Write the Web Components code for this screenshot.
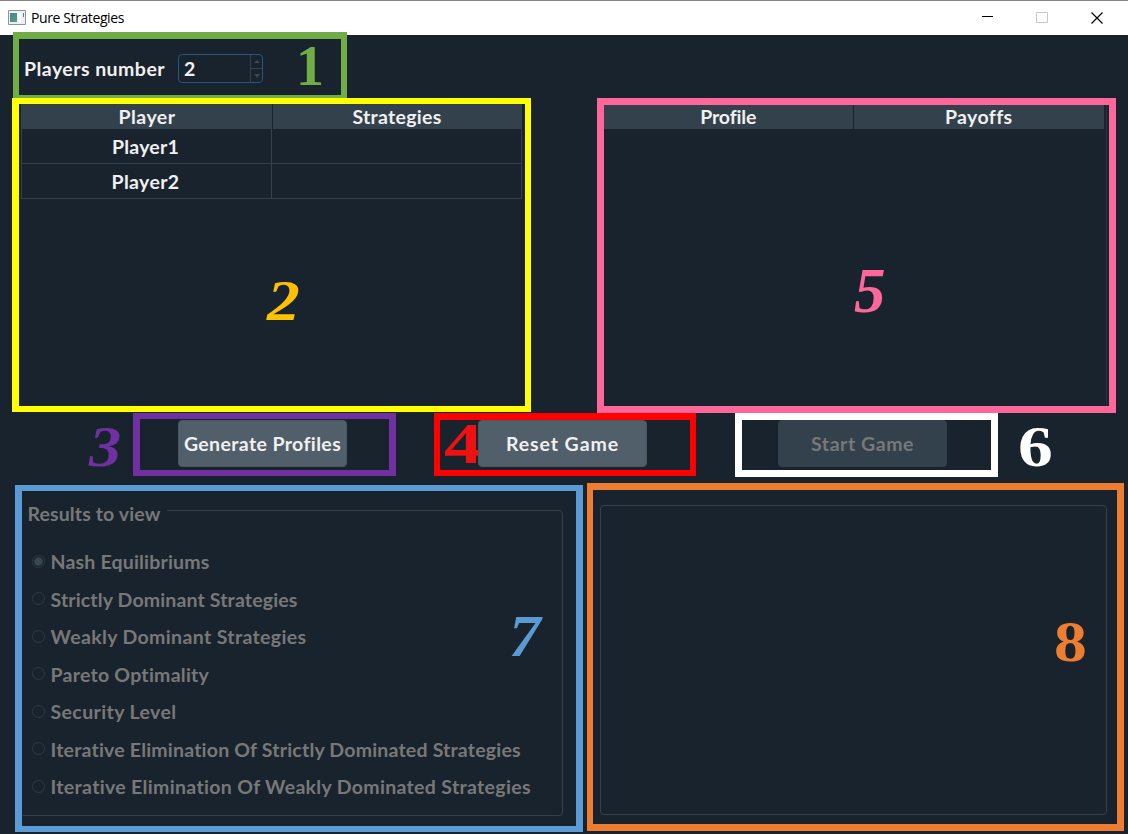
<!DOCTYPE html>
<html lang="en">
<head>
<meta charset="utf-8">
<title>Pure Strategies</title>
<style>
html,body{margin:0;height:100%;overflow:hidden;background:#19232d}
</style>
</head>
<body>
<strategy-app></strategy-app>
<script>
const define = (name, html, setup) => customElements.define(name, class extends HTMLElement {
  connectedCallback() {
    if (this.shadowRoot) return;
    const t = document.createElement('template');
    t.innerHTML = html;
    this.attachShadow({mode: 'open'}).append(t.content.cloneNode(true));
    if (setup) setup(this, this.shadowRoot);
  }
});

// Text tracked to occupy a given advance width.
define('fit-text', `<style>:host{display:inline-block;white-space:pre;flex:none}span{display:inline-block}</style><span><slot></slot></span>`, (el, root) => {
  const span = root.querySelector('span'), w = +el.getAttribute('w');
  const gap = (w - span.getBoundingClientRect().width) / el.textContent.length;
  span.style.letterSpacing = gap + 'px';
});

define('title-bar', `<style>
:host{display:flex;height:35px;box-sizing:border-box;border-top:1px solid #868686;background:#fff;color:#000;align-items:center;padding:0 25px 0 8px;font:14px/20px "Open Sans",sans-serif}
.i{margin-right:5px;flex:none;margin-top:-2px}.s{flex:1}.c{display:flex;gap:43px;align-items:center;margin-top:-1px}svg{display:block}
</style>
<svg class="i" width="18" height="15" viewBox="0 0 18 15"><defs><linearGradient id="g" x2="1" y2="1"><stop stop-color="#4b7fa0"/><stop offset="1" stop-color="#4fa476"/></linearGradient></defs><path d="M.5.5h17v14H.5z" fill="#eef1f3" stroke="#8d9499"/><path d="M2 3h7v9H2z" fill="url(#g)"/><path d="M10 3h3v9h-3z" fill="#fff"/><path d="M15 3h1v4h-1z" fill="#537d91"/></svg>
<fit-text w="93">Pure Strategies</fit-text><span class="s"></span>
<div class="c"><svg width="11" height="11"><path d="M0 4.5h11" stroke="#000"/></svg><svg width="12" height="11"><path d="M.5.5h11v10H.5z" fill="none" stroke="#c8c8c8"/></svg><svg width="12" height="12"><path d="M.5.5l11 11M11.5.5L.5 11.5" stroke="#000" stroke-width="1.2"/></svg></div>`);

define('spin-box', `<style>
:host{display:flex;box-sizing:border-box;width:85px;height:29px;border:1px solid #215880;border-radius:4px;line-height:27px;overflow:hidden}
.v{flex:1;padding-left:5px}.b{width:11px;border-left:1px solid #32414b;display:grid;grid-template-rows:13px 14px}.b div{display:grid;place-items:center}.b div+div{border-top:1px solid #32414b}svg{display:block}
</style><div class="v"><slot></slot></div><div class="b"><div><svg width="6" height="3"><path d="M0 3L3 0l3 3z" fill="#3a4853"/></svg></div><div><svg width="6" height="4"><path d="M0 0h6L3 4z" fill="#3a4853"/></svg></div></div>`);

define('data-table', `<style>
:host{display:block;height:305px;box-sizing:border-box}
.h{display:grid;grid-template-columns:1fr 1fr;height:27px;box-sizing:border-box;padding:2px 0 0 1px;line-height:25px;text-align:center}
.h{background:linear-gradient(90deg,#32414b calc(50% + .5px),#19232d calc(50% + .5px),#19232d calc(50% + 1.5px),#32414b 0)}
</style><div class="h"><slot name="a"></slot><slot name="b"></slot></div><slot></slot>`);

define('table-row', `<style>
:host{display:grid;grid-template-columns:250px 249px;width:501px;box-sizing:border-box;height:35px;border:1px solid #32414b;border-top:0;line-height:35px;text-align:center}
div{box-sizing:border-box;height:34px}.n{border-right:1px solid #32414b;padding-right:2px}
</style><div class="n"><slot></slot></div><div></div>`);

define('push-button', `<style>
:host{display:flex;box-sizing:border-box;width:169px;height:47px;border:1px solid #485761;border-radius:4px;background:#505f69;align-items:center;justify-content:center;line-height:46px}
:host([disabled]){background:#32414b;border-color:#32414b;color:#787878}
</style><slot></slot>`);

define('radio-item', `<style>
:host{display:flex;height:37.5px;align-items:center;gap:5.5px;line-height:37px}
svg{display:block;flex:none}circle.d{display:none}:host([checked]) .d{display:block}
</style><svg width="13" height="14"><circle cx="6.5" cy="6.5" r="6" fill="none" stroke="#2d3a44"/><circle class="d" cx="6.5" cy="6.5" r="4.3" fill="#384752"/></svg><slot></slot>`);

define('group-box', `<style>
:host{display:block;box-sizing:border-box;width:543px;height:306px;border:1px solid #32414b;border-radius:4px;padding:0 0 0 11px}
.t{display:block;width:max-content;height:26px;line-height:26px;margin:-10px 0 15.8px -12px;background:#19232d;padding:0 6px 0 7.5px}
</style><div class="t"><slot name="title"></slot></div><slot></slot>`);

// Coloured call-out rectangle laid over the window.
define('mark-frame', `<style>:host{position:absolute;box-sizing:border-box;border-style:solid;pointer-events:none}</style>`, el => {
  const [x, y, w, h] = el.getAttribute('box').split(' ');
  Object.assign(el.style, {left: x + 'px', top: y + 'px', width: w + 'px', height: h + 'px', borderColor: el.getAttribute('color'), borderWidth: el.getAttribute('edge')});
});

// Call-out numeral: "left baseline size scaleX".
define('mark-number', `<style>:host{position:absolute;font-family:"Liberation Serif",serif;font-weight:700;line-height:1;transform-origin:0 0;pointer-events:none}:host([italic]){font-style:italic}</style><slot></slot>`, el => {
  const [x, base, size, sx] = el.getAttribute('at').split(' ').map(Number);
  Object.assign(el.style, {left: x + 'px', top: base - size * .8375 + 'px', fontSize: size + 'px', transform: `scaleX(${sx})`, color: el.getAttribute('color')});
});

define('strategy-app', `<style>
:host{display:block;position:relative;width:1128px;height:834px;overflow:hidden;background:#19232d;color:#f0f0f0;font:700 19.5px Lato,sans-serif}
.top{display:flex;align-items:center;height:67px;padding-left:24px;gap:13px}
.tables{display:grid;grid-template-columns:501px 503px;column-gap:80px;padding-left:21px;height:318px}
.tables data-table+data-table{border-right:1px solid #26333d;padding-right:2px;width:505px}
.buttons{display:flex;gap:131px;padding-left:178px;height:47px;position:relative}
.bottom{display:flex;align-items:flex-start;padding:38px 0 0 20px;gap:37px;color:#787878}
.bottom group-box{margin-top:5px}
.out{box-sizing:border-box;width:507px;height:310px;border:1px solid #32414b;border-radius:4px}
</style>
<title-bar></title-bar>
<div class="top"><fit-text w="141">Players number</fit-text><spin-box>2</spin-box></div>
<div class="tables">
<data-table><fit-text slot="a" w="57">Player</fit-text><fit-text slot="b" w="89">Strategies</fit-text><table-row><fit-text w="67">Player1</fit-text></table-row><table-row><fit-text w="68">Player2</fit-text></table-row></data-table>
<data-table><fit-text slot="a" w="56">Profile</fit-text><fit-text slot="b" w="67">Payoffs</fit-text></data-table>
</div>
<mark-number at="444 463 57 1.35" color="#ed1111">4</mark-number>
<div class="buttons"><push-button><fit-text w="157">Generate Profiles</fit-text></push-button><push-button><fit-text w="113">Reset Game</fit-text></push-button><push-button disabled><fit-text w="103">Start Game</fit-text></push-button></div>
<div class="bottom">
<group-box><fit-text slot="title" w="133">Results to view</fit-text>
<radio-item checked><fit-text w="159">Nash Equilibriums</fit-text></radio-item>
<radio-item><fit-text w="247">Strictly Dominant Strategies</fit-text></radio-item>
<radio-item><fit-text w="256">Weakly Dominant Strategies</fit-text></radio-item>
<radio-item><fit-text w="159">Pareto Optimality</fit-text></radio-item>
<radio-item><fit-text w="126">Security Level</fit-text></radio-item>
<radio-item><fit-text w="471">Iterative Elimination Of Strictly Dominated Strategies</fit-text></radio-item>
<radio-item><fit-text w="481">Iterative Elimination Of Weakly Dominated Strategies</fit-text></radio-item>
</group-box>
<div class="out"></div>
</div>
<mark-frame box="13 32 334 69" edge="7px 6px 6px 6px" color="#70ad47"></mark-frame>
<mark-frame box="12 98 519 314" edge="6px 6px 6px 7px" color="#ffff00"></mark-frame>
<mark-frame box="597 98 519 315" edge="7px" color="#ff6699"></mark-frame>
<mark-frame box="133 413 263 63" edge="6px 7px 6px 7px" color="#7030a0"></mark-frame>
<mark-frame box="434 413 262 63" edge="7px 6px 6px 6px" color="#ff0000"></mark-frame>
<mark-frame box="735 413 263 64" edge="7px" color="#ffffff"></mark-frame>
<mark-frame box="15 485 568 347" edge="6px 7px 6px 7px" color="#5b9bd5"></mark-frame>
<mark-frame box="587 483 537 348" edge="7px 7px 7px 6px" color="#ed7d31"></mark-frame>
<mark-number at="296 85 56 1" color="#70ad47">1</mark-number>
<mark-number italic at="267 320 57 1.15" color="#ffc000">2</mark-number>
<mark-number italic at="89 466 57 1.13" color="#7030a0">3</mark-number>
<mark-number italic at="854 313 63 1" color="#ff6699">5</mark-number>
<mark-number at="1018 466 57 1.22" color="#ffffff">6</mark-number>
<mark-number italic at="509 656 59 1.07" color="#5b9bd5">7</mark-number>
<mark-number at="1054 661 57 1.15" color="#ed7d31">8</mark-number>`);
</script>
</body>
</html>
